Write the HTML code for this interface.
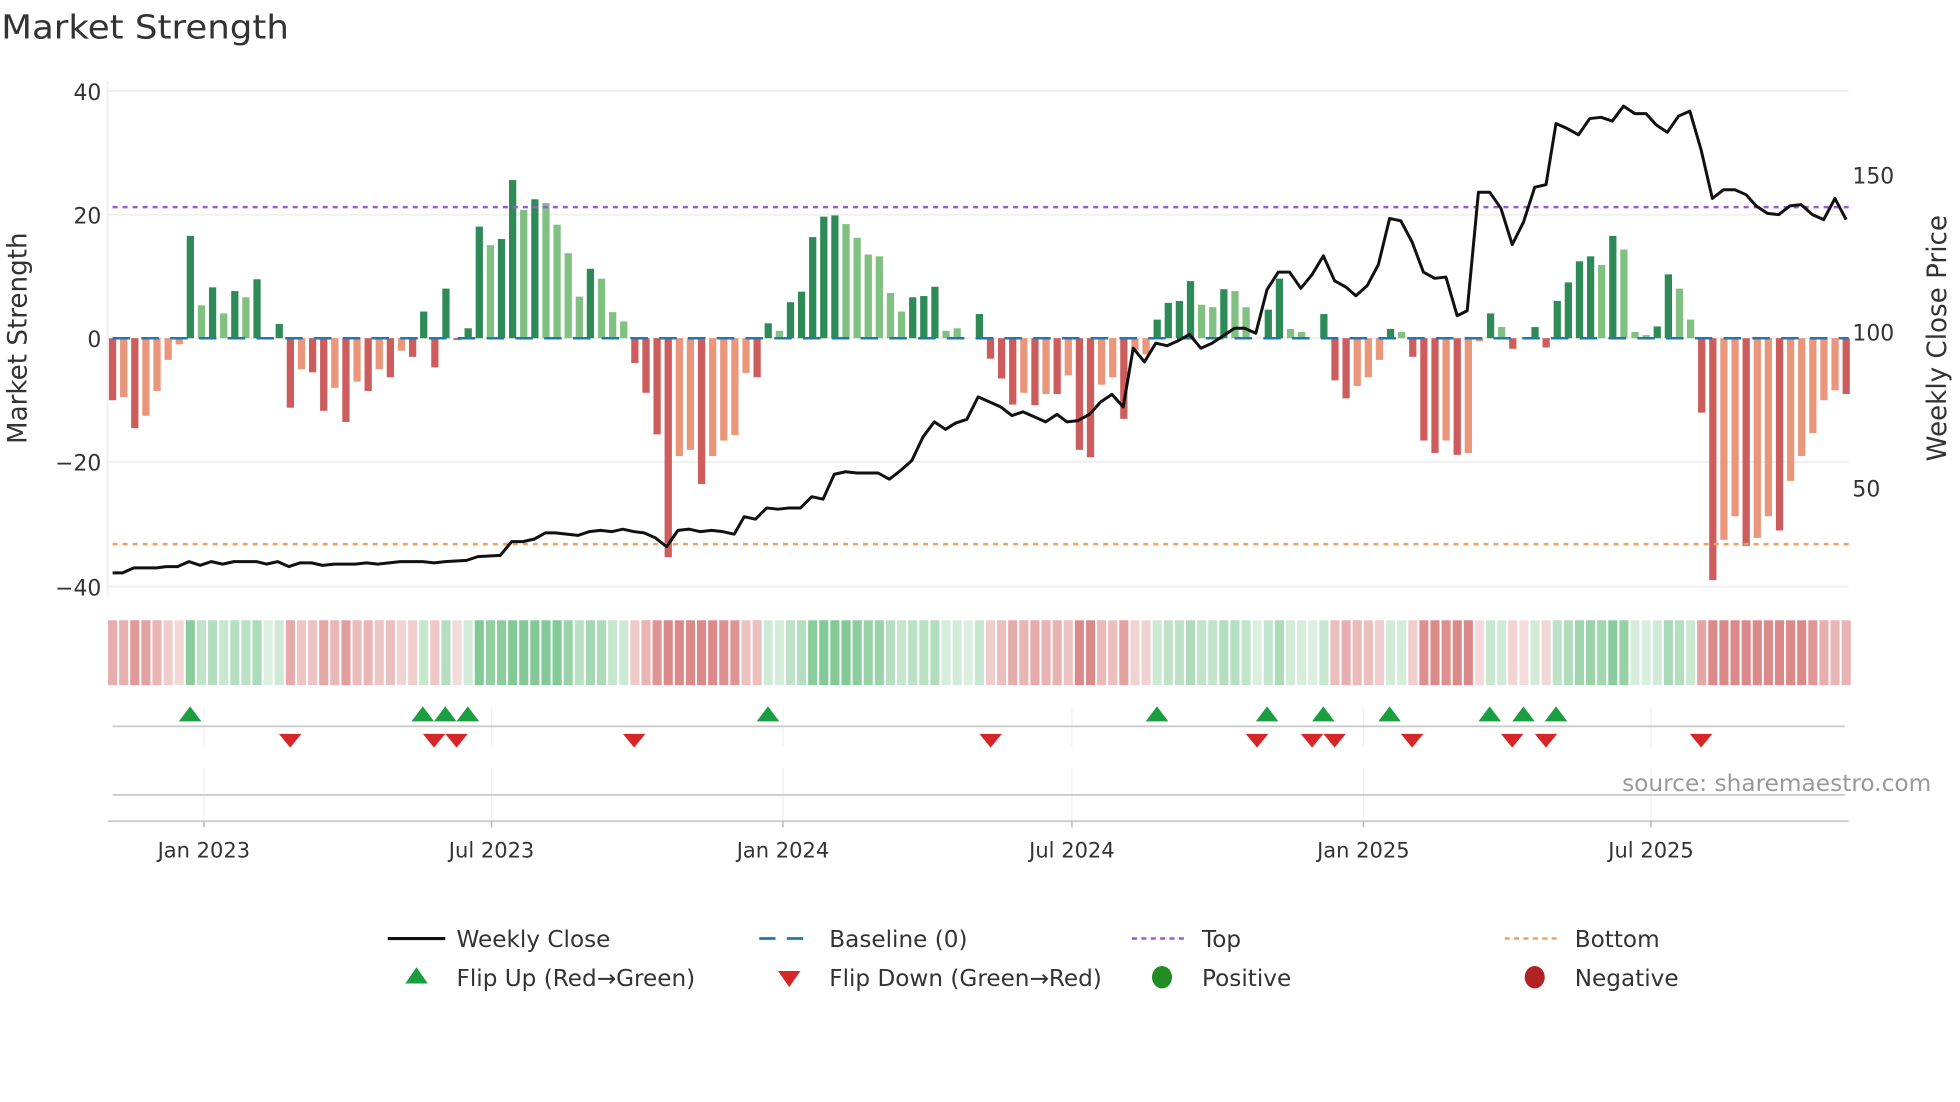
<!DOCTYPE html>
<html><head><meta charset="utf-8"><style>
html,body{margin:0;padding:0;background:#fff;}
svg{display:block;font-family:"DejaVu Sans","Liberation Sans",sans-serif;}
</style></head><body>
<svg id="s" width="1960" height="1102" viewBox="0 0 1567 883" preserveAspectRatio="none" xmlns="http://www.w3.org/2000/svg">
<rect width="1567" height="883" fill="#fff"/>
<text x="1" y="31" font-size="26.5" fill="#333" textLength="230" lengthAdjust="spacingAndGlyphs">Market Strength</text>
<g stroke="#efefef" stroke-width="1.5">
<line x1="86" y1="73" x2="1478" y2="73"/><line x1="86" y1="172" x2="1478" y2="172"/>
<line x1="86" y1="271" x2="1478" y2="271"/><line x1="86" y1="370" x2="1478" y2="370"/>
<line x1="86" y1="470" x2="1478" y2="470"/><line x1="86" y1="65" x2="86" y2="478"/>
</g>
<g font-size="17.5" fill="#333" text-anchor="end">
<text x="81" y="80">40</text><text x="81" y="179">20</text><text x="81" y="278">0</text>
<text x="81" y="377">−20</text><text x="81" y="477">−40</text>
</g>
<g font-size="17.5" fill="#333">
<text x="1481" y="147">150</text><text x="1481" y="273">100</text><text x="1481" y="398">50</text>
</g>
<text transform="translate(21,271) rotate(-90)" font-size="21" fill="#333" text-anchor="middle">Market Strength</text>
<text transform="translate(1556,271) rotate(-90)" font-size="21" fill="#333" text-anchor="middle">Weekly Close Price</text>
<g id="bars"></g>
<line x1="90" y1="271" x2="1478" y2="271" stroke="#1f77b4" stroke-width="2" stroke-dasharray="14,9" id="base"/>
<line x1="90" y1="166" x2="1478" y2="166" stroke="#9b59d6" stroke-width="2" stroke-dasharray="4,4"/>
<line x1="90" y1="436" x2="1478" y2="436" stroke="#f0a060" stroke-width="2" stroke-dasharray="4,4"/>
<polyline id="price" fill="none" stroke="#111" stroke-width="2.4" stroke-linejoin="round"/>
<g id="heat"></g>
<g stroke="#eef0f3" stroke-width="1">
<line x1="163" y1="567" x2="163" y2="598"/><line x1="393" y1="567" x2="393" y2="598"/><line x1="626" y1="567" x2="626" y2="598"/>
<line x1="857" y1="567" x2="857" y2="598"/><line x1="1090" y1="567" x2="1090" y2="598"/><line x1="1320" y1="567" x2="1320" y2="598"/>
<line x1="163" y1="615" x2="163" y2="658"/><line x1="393" y1="615" x2="393" y2="658"/><line x1="626" y1="615" x2="626" y2="658"/>
<line x1="857" y1="615" x2="857" y2="658"/><line x1="1090" y1="615" x2="1090" y2="658"/><line x1="1320" y1="615" x2="1320" y2="658"/>
</g>
<line x1="90" y1="582" x2="1475" y2="582" stroke="#ccc" stroke-width="1.5"/>
<line x1="90" y1="637" x2="1475" y2="637" stroke="#ccc" stroke-width="1.5"/>
<line x1="86" y1="658" x2="1478" y2="658" stroke="#ccc" stroke-width="1.5"/>
<g stroke="#bbb" stroke-width="1.2">
<line x1="163" y1="658" x2="163" y2="663"/><line x1="393" y1="658" x2="393" y2="663"/><line x1="626" y1="658" x2="626" y2="663"/>
<line x1="857" y1="658" x2="857" y2="663"/><line x1="1090" y1="658" x2="1090" y2="663"/><line x1="1320" y1="658" x2="1320" y2="663"/>
</g>
<g id="marks"></g>
<text x="1544" y="634" font-size="18.6" fill="#999" text-anchor="end">source: sharemaestro.com</text>
<g font-size="16.8" fill="#333" text-anchor="middle">
<text x="163" y="687">Jan 2023</text><text x="393" y="687">Jul 2023</text><text x="626" y="687">Jan 2024</text>
<text x="857" y="687">Jul 2024</text><text x="1090" y="687">Jan 2025</text><text x="1320" y="687">Jul 2025</text>
</g>
<g font-size="18.5" fill="#333">
<line x1="310" y1="752" x2="356" y2="752" stroke="#111" stroke-width="2.5"/>
<text x="365" y="759">Weekly Close</text>
<line x1="607" y1="752" x2="650" y2="752" stroke="#1f77b4" stroke-width="2.2" stroke-dasharray="13,9"/>
<text x="663" y="759">Baseline (0)</text>
<line x1="905" y1="752" x2="948" y2="752" stroke="#9b59d6" stroke-width="2" stroke-dasharray="4,3.5"/>
<text x="961" y="759">Top</text>
<line x1="1203" y1="752" x2="1246" y2="752" stroke="#f0a060" stroke-width="2" stroke-dasharray="4,3.5"/>
<text x="1259" y="759">Bottom</text>
<polygon points="324,788 342,788 333,775" fill="#1a9e3f"/>
<text x="365" y="790">Flip Up (Red→Green)</text>
<polygon points="622,778 640,778 631,791" fill="#d62728"/>
<text x="663" y="790">Flip Down (Green→Red)</text>
<ellipse cx="929" cy="783" rx="8" ry="9" fill="#228b22"/>
<text x="961" y="790">Positive</text>
<ellipse cx="1227" cy="783" rx="8" ry="9" fill="#b22222"/>
<text x="1259" y="790">Negative</text>
</g>
</svg>
<script>
var NS="http://www.w3.org/2000/svg";
var d=[[-10,1],[-9.5,0],[-14.5,1],[-12.5,0],[-8.5,0],[-3.5,0],[-1,0],[16.5,1],[5.3,0],[8.2,1],[4,0],[7.6,1],[6.6,0],[9.5,1],[0,1],[2.3,1],
[-11.2,1],[-5,0],[-5.5,1],[-11.7,1],[-8,0],[-13.5,1],[-7,0],[-8.5,1],[-5,0],[-6.3,1],[-2,0],[-3,1],[4.3,1],[-4.7,1],[8,1],[-0.3,1],[1.6,1],
[18,1],[15,0],[16,1],[25.5,1],[20.7,0],[22.4,1],[21.8,0],[18.3,0],[13.7,0],[6.7,0],[11.2,1],[9.6,0],[4.2,0],[2.7,0],
[-4,1],[-8.8,1],[-15.5,1],[-35.3,1],[-19,0],[-18,0],[-23.5,1],[-19,0],[-16.5,0],[-15.6,0],[-5.6,0],[-6.3,1],
[2.4,1],[1.2,0],[5.8,1],[7.5,1],[16.3,1],[19.6,1],[19.8,1],[18.4,0],[16.2,0],[13.5,0],[13.2,0],[7.3,0],[4.3,0],[6.6,1],[6.8,1],[8.3,1],[1.2,0],[1.6,0],[0,1],[3.9,1],
[-3.3,1],[-6.5,1],[-10.7,1],[-8.8,0],[-10.8,1],[-9,0],[-9,1],[-6,0],[-18,1],[-19.2,1],[-7.5,0],[-6.3,0],[-13,1],[-2,0],[-2.6,0],
[3,1],[5.7,1],[6,1],[9.2,1],[5.4,0],[5,0],[7.9,1],[7.6,0],[5,0],[0,1],[4.6,1],[9.6,1],[1.5,0],[1,0],[0,1],[3.9,1],
[-6.8,1],[-9.7,1],[-7.7,0],[-6.3,0],[-3.5,0],[1.5,1],[1,0],[-3,1],[-16.5,1],[-18.5,1],[-16.5,0],[-18.8,1],[-18.5,0],[-0.5,0],
[4,1],[1.8,0],[-1.7,1],[0,1],[1.8,1],[-1.5,1],[6,1],[9,1],[12.4,1],[13.2,1],[11.8,0],[16.5,1],[14.3,0],[1,0],[0.5,0],[1.9,1],[10.3,1],[8,0],[3,0],
[-12,1],[-39,1],[-32.5,0],[-28.7,0],[-33.5,1],[-32.2,0],[-28.7,0],[-31,1],[-23,0],[-19,0],[-15.3,0],[-10,0],[-8.4,0],[-9,1]];
var n=d.length, sp=(1476-90)/(n-1);
var bars=document.getElementById('bars'), heat=document.getElementById('heat');
var last=1;
for(var i=0;i<n;i++){
 var v=d[i][0],dk=d[i][1],cx=90+i*sp,h=Math.abs(v)*4.97;
 var c=v>=0?(dk?'#2e8b57':'#80c080'):(dk?'#cd5c5c':'#e9967a');
 if(h>0.5){var r=document.createElementNS(NS,'rect');r.setAttribute('x',cx-2.9);r.setAttribute('width',5.8);
 r.setAttribute('y',v>=0?271-h:271);r.setAttribute('height',h);r.setAttribute('fill',c);bars.appendChild(r);}
 if(v>0)last=1;else if(v<0)last=-1;
 var hr=document.createElementNS(NS,'rect');hr.setAttribute('x',cx-sp/2+0.8);hr.setAttribute('width',sp-1.6);
 hr.setAttribute('y',497);hr.setAttribute('height',52);
 var a=Math.min(0.85,0.25+Math.abs(v)/30);
 hr.setAttribute('fill',last>0?'rgb(60,170,90)':'rgb(200,70,70)');hr.setAttribute('fill-opacity',a*0.75);heat.appendChild(hr);
}
var p=[[90,459],[98,459],[107,455],[125,455],[133,454],[142,454],[151,450],[160,453],[169,450],[178,452],[187,450],[205,450],[213,452],[222,450],[231,454],[240,451],[249,451],[258,453],[267,452],[284,452],[293,451],[302,452],[311,451],[320,450],[338,450],[347,451],[356,450],[373,449],[382,446],[400,445],[409,434],[418,434],[427,432],[436,427],[444,427],[462,429],[471,426],[480,425],[489,426],[498,424],[507,426],[515,427],[524,431],[533,438],[542,425],[551,424],[560,426],[569,425],[578,426],[587,428],[595,414],[604,416],[613,407],[622,408],[631,407],[640,407],[649,398],[658,400],[667,380],[676,378],[685,379],[702,379],[711,384],[720,377],[729,369],[738,350],[747,338],[756,344],[764,339],[773,336],[782,318],[791,322],[800,326],[809,333],[818,330],[827,334],[836,338],[845,332],[853,338],[862,337],[871,332],[880,322],[889,316],[898,326],[906,279],[915,290],[924,275],[933,277],[942,273],[951,268],[960,279],[969,275],[978,269],[987,263],[995,263],[1004,267],[1013,232],[1022,218],[1031,218],[1040,231],[1049,220],[1058,205],[1067,225],[1076,230],[1084,237],[1093,229],[1102,212],[1111,175],[1120,177],[1129,194],[1138,218],[1147,223],[1156,222],[1165,253],[1173,249],[1182,154],[1191,154],[1200,167],[1209,196],[1218,178],[1227,150],[1236,148],[1244,99],[1253,103],[1262,108],[1271,95],[1280,94],[1289,97],[1298,85],[1307,91],[1316,91],[1324,100],[1333,106],[1342,93],[1351,89],[1360,120],[1369,159],[1378,152],[1387,152],[1396,156],[1404,165],[1413,171],[1422,172],[1431,165],[1440,164],[1449,172],[1458,176],[1467,159],[1476,176]];
document.getElementById('price').setAttribute('points',p.map(function(q){return q.join(',')}).join(' '));
var marks=document.getElementById('marks');
[152,338,356,374,614,925,1013,1058,1111,1191,1218,1244].forEach(function(x){var g=document.createElementNS(NS,'polygon');
g.setAttribute('points',(x-9)+',578 '+(x+9)+',578 '+x+',566');g.setAttribute('fill','#1a9e3f');marks.appendChild(g);});
[232,347,365,507,792,1005,1049,1067,1129,1209,1236,1360].forEach(function(x){var g=document.createElementNS(NS,'polygon');
g.setAttribute('points',(x-9)+',588 '+(x+9)+',588 '+x+',599');g.setAttribute('fill','#d62728');marks.appendChild(g);});
</script>
</body></html>
